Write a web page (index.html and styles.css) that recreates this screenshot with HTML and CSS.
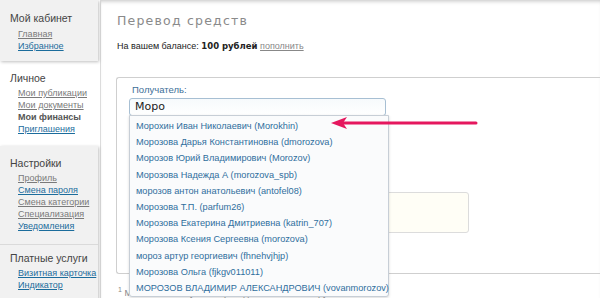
FILE: index.html
```html
<!DOCTYPE html>
<html lang="ru">
<head>
    <meta charset="UTF-8">
    <title>Перевод средств</title>
    <link rel="stylesheet" href="styles.css">
</head>
<body>
    <div class="page">
        <aside class="sidebar">
            <div class="side-box grey first">
                <div class="side-title">Мой кабинет</div>
                <a href="#" class="muted">Главная</a>
                <a href="#">Избранное</a>
            </div>
            <div class="side-box plain">
                <div class="side-title">Личное</div>
                <a href="#" class="muted">Мои публикации</a>
                <a href="#" class="muted">Мои документы</a>
                <span class="current">Мои финансы</span>
                <a href="#">Приглашения</a>
            </div>
            <div class="side-box grey last">
                <div class="side-title">Настройки</div>
                <a href="#" class="muted">Профиль</a>
                <a href="#">Смена пароля</a>
                <a href="#" class="muted">Смена категории</a>
                <a href="#" class="muted">Специализация</a>
                <a href="#">Уведомления</a>
                <div class="side-sep"></div>
                <div class="side-title">Платные услуги</div>
                <a href="#">Визитная карточка</a>
                <a href="#">Индикатор</a>
            </div>
        </aside>

        <main class="content">
            <h1>Перевод средств</h1>
            <p class="balance">На вашем балансе: <b>100 рублей</b> <a href="#">пополнить</a></p>

            <div class="transfer">
                <label for="recipient">Получатель:</label>
                <div class="field">
                    <input type="text" id="recipient" value="Моро">
                    <ul class="suggest">
                        <li>Морохин Иван Николаевич (Morokhin)</li>
                        <li>Морозова Дарья Константиновна (dmorozova)</li>
                        <li>Морозов Юрий Владимирович (Morozov)</li>
                        <li>Морозова Надежда А (morozova_spb)</li>
                        <li>морозов антон анатольевич (antofel08)</li>
                        <li>Морозова Т.П. (parfum26)</li>
                        <li>Морозова Екатерина Дмитриевна (katrin_707)</li>
                        <li>Морозова Ксения Сергеевна (morozova)</li>
                        <li>мороз артур георгиевич (fhnehvjhjp)</li>
                        <li>Морозова Ольга (fjkgv011011)</li>
                        <li>МОРОЗОВ ВЛАДИМИР АЛЕКСАНДРОВИЧ (vovanmorozov)</li>
                    </ul>
                </div>
                <div class="comment"></div>
            </div>

            <p class="note"><sup>1</sup> Минимальная сумма перевода составляет 50 рублей</p>

            <svg class="pointer" width="150" height="16" viewBox="0 0 150 16">
                <line x1="10" y1="8" x2="146" y2="8" stroke="#e5175e" stroke-width="3" stroke-linecap="round"/>
                <path d="M1 8 L17 2 L13 8 L17 14 Z" fill="#e5175e"/>
            </svg>
        </main>
    </div>
</body>
</html>
```

FILE: styles.css
```css
body {
    margin: 0;
    font-family: "Liberation Sans", Arial, sans-serif;
    background: #fff;
}
.page {
    display: flex;
    width: 600px;
    height: 298px;
    overflow: hidden;
}
.sidebar {
    width: 100px;
    flex-shrink: 0;
    border-right: 1px solid #dcdcdc;
    background: #fff;
}
.side-box {
    padding: 11px 0 11px 10px;
}
.side-box a, .side-box .current {
    display: block;
    margin-left: 8px;
    font-size: 9px;
    line-height: 12px;
    color: #1b6c9c;
}
.side-box a.muted {
    color: #7a7a7a;
}
.side-box .current {
    font-weight: bold;
    color: #555;
}
.side-title {
    font-size: 10.5px;
    line-height: 13px;
    color: #444;
    margin-bottom: 2px;
}
.first {
    padding-top: 12px;
    padding-bottom: 9px;
}
.first .side-title {
    margin-bottom: 3px;
}
.grey {
    background: #f1f1f1;
    box-shadow: 1px 1px 3px rgba(0, 0, 0, 0.25);
    margin-right: 2px;
}
.last {
    height: 200px;
}
.side-sep {
    border-top: 1px solid #dadada;
    margin: 12px 0 7px -10px;
}
.content {
    flex: 1;
    position: relative;
    padding: 0 0 0 15px;
    box-shadow: inset 0 4px 4px -3px rgba(0, 0, 0, 0.25);
}
h1 {
    margin: 13px 0 0 1px;
    font-family: "DejaVu Sans", sans-serif;
    font-weight: normal;
    font-size: 12.5px;
    letter-spacing: 1.2px;
    color: #8a8a8a;
}
.balance {
    margin: 13px 0 0 1px;
    font-size: 9px;
    color: #222;
}
.balance b {
    font-family: "DejaVu Sans", sans-serif;
    font-size: 8.5px;
}
.balance a {
    color: #888;
}
.transfer {
    margin-top: 26px;
    border: 1px solid #cfcfcf;
    border-right: none;
    border-radius: 3px 0 0 3px;
    height: 189px;
    padding: 6px 0 0 12px;
}
.transfer label {
    display: block;
    margin-left: 3px;
    font-size: 9.5px;
    line-height: 12px;
    color: #3d6f98;
}
.field {
    position: relative;
    width: 257px;
}
.field input {
    box-sizing: border-box;
    width: 257px;
    height: 18px;
    margin: 0;
    padding: 0 5px;
    border: 1px solid #a7bfd3;
    border-radius: 3px;
    background: linear-gradient(#f7fafc, #fff);
    font-family: "DejaVu Sans", sans-serif;
    font-size: 11px;
    color: #222;
}
.suggest {
    position: absolute;
    top: 19px;
    left: 0;
    width: 258px;
    margin: 0;
    padding: 2px 0 0;
    list-style: none;
    background: #fafbfc;
    border: 1px solid #c7ced6;
    border-radius: 0 0 3px 3px;
    box-shadow: 0 1px 3px rgba(0, 0, 0, 0.15);
    z-index: 2;
}
.suggest li {
    height: 16.2px;
    line-height: 16.2px;
    padding-left: 6px;
    font-size: 9.2px;
    color: #2f6e9c;
    white-space: nowrap;
}
.comment {
    margin: 76px 0 0 3px;
    width: 337px;
    height: 41px;
    box-sizing: border-box;
    background: #fffef6;
    border: 1px solid #dcdcdc;
    border-radius: 3px;
}
.note {
    margin: 12px 0 0 2px;
    font-size: 9px;
    color: #888;
}
.note sup {
    font-size: 7px;
}
.pointer {
    position: absolute;
    left: 229px;
    top: 115px;
    z-index: 3;
}
```
